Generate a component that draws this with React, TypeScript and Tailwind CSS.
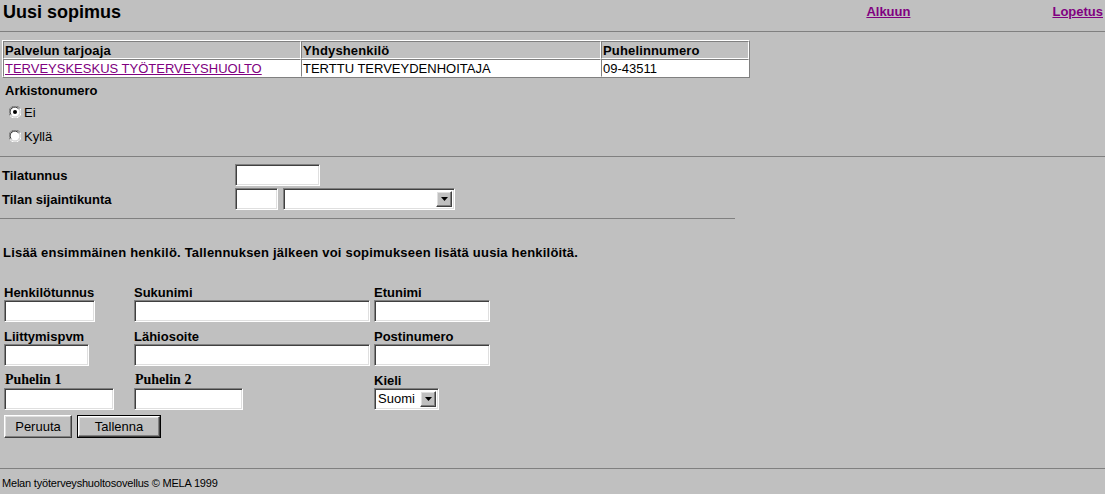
import React from 'react';

const sans = "font-['Liberation_Sans',Arial,sans-serif]";
const inset =
  'border border-t-[#808080] border-l-[#808080] border-b-white border-r-white shadow-[inset_1px_1px_0_#404040,inset_-1px_-1px_0_#dfdfdf] bg-white';
const outset =
  'border border-t-white border-l-white border-b-[#404040] border-r-[#404040] shadow-[inset_-1px_-1px_0_#808080,inset_1px_1px_0_#dfdfdf] bg-[#c0c0c0]';

const TextBox = ({ w }: { w: string }) => <div className={`${inset} h-[22px] ${w}`} />;

const Select = ({ w, value }: { w: string; value?: string }) => (
  <div className={`${inset} h-[22px] ${w} flex items-center p-[2px]`}>
    <span className="flex-1 text-[13px] leading-[16px] pl-[1px] text-black">{value}</span>
    <div className={`${outset} w-[16px] h-[16px] flex items-center justify-center`}>
      <svg width="7" height="4" viewBox="0 0 7 4">
        <path d="M0 0h7L3.5 4z" fill="#000" />
      </svg>
    </div>
  </div>
);

const Radio = ({ checked }: { checked?: boolean }) => (
  <svg width="12" height="12" viewBox="0 0 12 12">
    <path d="M11 2.5A6 6 0 0 0 1 9.5" stroke="#808080" strokeWidth="1" fill="none" />
    <circle cx="6" cy="6" r="4.5" fill="#fff" />
    <path d="M9.5 3A4.5 4.5 0 0 0 2 8.5" stroke="#404040" strokeWidth="1" fill="none" />
    <path d="M1 9.5A6 6 0 0 0 11 2.5" stroke="#fff" strokeWidth="1" fill="none" />
    <path d="M2.5 9.5A4.5 4.5 0 0 0 9.5 3" stroke="#dfdfdf" strokeWidth="1" fill="none" />
    {checked && <circle cx="6" cy="6" r="2" fill="#000" />}
  </svg>
);

const Label = ({ children, serif }: { children: React.ReactNode; serif?: boolean }) => (
  <div className="h-[22px] flex items-end">
    <span
      className={
        serif
          ? "font-['Liberation_Serif','Times_New_Roman',serif] font-bold text-[14px] leading-[16px] pl-[1px]"
          : 'font-bold text-[13px] leading-[15px]'
      }
    >
      {children}
    </span>
  </div>
);

export default function App() {
  return (
    <div className={`${sans} bg-[#c0c0c0] min-h-screen h-[494px] text-black flex flex-col`}>
      {/* Header */}
      <div className="h-[31px] flex items-start pl-[3px] pr-[2px]">
        <h1 className="flex-1 pt-[2px] text-[18px] leading-[20px] font-bold">Uusi sopimus</h1>
        <a className="pt-[4px] text-[13px] leading-[15px] font-bold text-[#800080] underline" href="#">
          Alkuun
        </a>
        <a className="ml-[142px] pt-[4px] text-[13px] leading-[15px] font-bold text-[#800080] underline" href="#">
          Lopetus
        </a>
      </div>
      <div className="h-px bg-[#808080]" />

      {/* Provider table */}
      <div className="mt-[8px] ml-[2px] w-[748px] border border-t-white border-l-white border-b-[#808080] border-r-[#808080]">
        <div className="grid grid-cols-[298px_300px_1fr] text-[13px] leading-[15px]">
          {['Palvelun tarjoaja', 'Yhdyshenkilö', 'Puhelinnumero'].map((h) => (
            <div key={h} className="h-[18px] border border-t-[#808080] border-l-[#808080] border-b-white border-r-white px-[1px] font-bold tracking-[0.15px] pt-px">
              {h}
            </div>
          ))}
          <div className="h-[18px] border border-t-[#808080] border-l-[#808080] border-b-white border-r-white bg-white px-[1px] pt-px">
            <a href="#" className="text-[#800080] underline">TERVEYSKESKUS TYÖTERVEYSHUOLTO</a>
          </div>
          <div className="h-[18px] border border-t-[#808080] border-l-[#808080] border-b-white border-r-white bg-white px-[1px] pt-px">
            TERTTU TERVEYDENHOITAJA
          </div>
          <div className="h-[18px] border border-t-[#808080] border-l-[#808080] border-b-white border-r-white bg-white px-[1px] pt-px">
            09-43511
          </div>
        </div>
      </div>

      {/* Arkistonumero */}
      <div className="mt-[5px] pl-[5px] font-bold text-[13px] leading-[15px]">Arkistonumero</div>
      <div className="mt-[2px] pl-[9px] text-[13px] leading-[15px]">
        <div className="h-[24px] flex items-center gap-[3px]">
          <Radio checked />
          <span>Ei</span>
        </div>
        <div className="h-[24px] flex items-center gap-[3px]">
          <Radio />
          <span>Kyllä</span>
        </div>
      </div>
      <div className="mt-[8px] h-px bg-[#808080]" />

      {/* Tila */}
      <div className="mt-[7px] grid grid-cols-[233px_auto] gap-y-[2px] pl-[2px] items-center text-[13px] leading-[15px] font-bold">
        <span>Tilatunnus</span>
        <TextBox w="w-[85px]" />
        <span>Tilan sijaintikunta</span>
        <div className="flex gap-[5px]">
          <TextBox w="w-[43px]" />
          <Select w="w-[172px]" />
        </div>
      </div>
      <div className="mt-[8px] h-px w-[735px] bg-[#808080]" />

      <p className="mt-[26px] pl-[3px] font-bold text-[13px] leading-[15px] tracking-[0.2px]">
        Lisää ensimmäinen henkilö. Tallennuksen jälkeen voi sopimukseen lisätä uusia henkilöitä.
      </p>

      {/* Person form */}
      <div className="mt-[18px] pl-[4px] grid grid-cols-[130px_240px_auto]">
        <div>
          <Label>Henkilötunnus</Label>
          <TextBox w="w-[91px]" />
        </div>
        <div>
          <Label>Sukunimi</Label>
          <TextBox w="w-[236px]" />
        </div>
        <div>
          <Label>Etunimi</Label>
          <TextBox w="w-[116px]" />
        </div>
        <div>
          <Label>Liittymispvm</Label>
          <TextBox w="w-[85px]" />
        </div>
        <div>
          <Label>Lähiosoite</Label>
          <TextBox w="w-[236px]" />
        </div>
        <div>
          <Label>Postinumero</Label>
          <TextBox w="w-[116px]" />
        </div>
        <div>
          <Label serif>Puhelin 1</Label>
          <TextBox w="w-[110px]" />
        </div>
        <div>
          <Label serif>Puhelin 2</Label>
          <TextBox w="w-[109px]" />
        </div>
        <div>
          <Label>Kieli</Label>
          <Select w="w-[65px]" value="Suomi" />
        </div>
      </div>
      <div className="mt-[5px] pl-[4px] flex gap-[5px] text-[13px] leading-[15px]">
        <button className={`${outset} w-[68px] h-[23px]`}>Peruuta</button>
        <div className="border border-black">
          <button className={`${outset} w-[82px] h-[21px]`}>Tallenna</button>
        </div>
      </div>

      {/* Footer */}
      <div className="mt-[30px] h-px bg-[#808080]" />
      <p className="mt-[8px] pl-[2px] text-[11px] leading-[13px] tracking-[-0.2px]">
        Melan työterveyshuoltosovellus © MELA 1999
      </p>
    </div>
  );
}
